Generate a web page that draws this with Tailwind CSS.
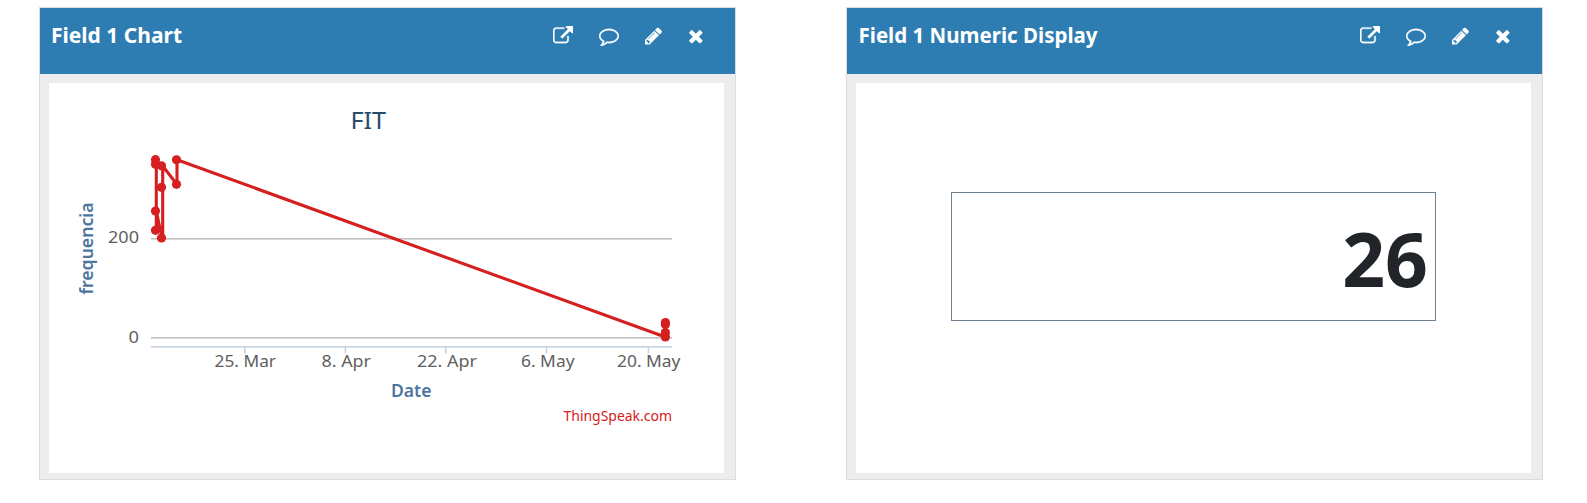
<!DOCTYPE html>
<html lang="en">
<head>
<meta charset="utf-8">
<title>Channel</title>
<script src="https://cdn.jsdelivr.net/npm/@tailwindcss/browser@4"></script>
</head>
<body class="bg-white font-['Noto_Sans',sans-serif]">
<svg class="hidden">
  <symbol id="ext" viewBox="0 0 1792 1792"><path d="M1408 928v320q0 119-84.5 203.5t-203.5 84.5h-832q-119 0-203.5-84.5t-84.5-203.5v-832q0-119 84.5-203.5t203.5-84.5h704q14 0 23 9t9 23v64q0 14-9 23t-23 9h-704q-66 0-113 47t-47 113v832q0 66 47 113t113 47h832q66 0 113-47t47-113v-320q0-14 9-23t23-9h64q14 0 23 9t9 23zm384-864v512q0 26-19 45t-45 19-45-19l-176-176-652 652q-10 10-23 10t-23-10l-114-114q-10-10-10-23t10-23l652-652-176-176q-19-19-19-45t19-45 45-19h512q26 0 45 19t19 45z"/></symbol>
  <symbol id="comment" viewBox="0 0 1792 1792"><path d="M896 384q-204 0-381.5 69.5t-282 187.5-104.5 255q0 112 71.5 213.5t201.5 175.5l87 50-27 96q-24 91-70 172 152-63 275-171l43-38 57 6q69 8 130 8 204 0 381.5-69.5t282-187.5 104.5-255-104.5-255-282-187.5-381.5-69.5zm896 512q0 174-120 321.5t-326 233-450 85.5q-70 0-145-8-198 175-460 242-49 14-114 22h-5q-15 0-27-10.5t-16-27.5v-1q-3-4-.5-12t2-10 4.5-9.5l6-9 7-8.5 8-9q7-8 31-34.5t34.5-38 31-39.5 32.5-51 27-59 26-76q-157-89-247.5-220t-90.5-281q0-174 120-321.5t326-233 450-85.5 450 85.5 326 233 120 321.5z"/></symbol>
  <symbol id="pencil" viewBox="128 0 1536 1792"><path d="M491 1536l91-91-235-235-91 91v107h128v128h107zm523-928q0-22-22-22-10 0-17 7l-542 542q-7 7-7 17 0 22 22 22 10 0 17-7l542-542q7-7 7-17zm-54-192l416 416-832 832h-416v-416zm683 96q0 53-37 90l-166 166-416-416 166-165q36-38 90-38 53 0 91 38l235 234q37 39 37 91z"/></symbol>
  <symbol id="times" viewBox="192 0 1408 1792"><path d="M1490 1322q0 40-28 68l-136 136q-28 28-68 28t-68-28l-294-294-294 294q-28 28-68 28t-68-28l-136-136q-28-28-28-68t28-68l294-294-294-294q-28-28-28-68t28-68l136-136q28-28 68-28t68 28l294 294 294-294q28-28 68-28t68 28l136 136q28 28 28 68t-28 68l-294 294 294 294q28 28 28 68z"/></symbol>
</svg>
<main class="flex gap-[110px] pl-[39px] pt-[7px]">
  <section class="flex h-[473px] w-[697px] shrink-0 flex-col border border-[#dcdcdc] bg-[#ededed]">
    <header class="flex h-[66px] shrink-0 items-start justify-between bg-[#2e7db2] pl-[11px] pr-[31px] pt-[13px] text-white">
      <h2 class="text-[21.5px]/[28px] font-bold"><svg width="260" height="28" class="overflow-visible" fill="currentColor"><text x="0" y="22" textLength="131" lengthAdjust="spacingAndGlyphs">Field 1 Chart</text></svg></h2>
      <div class="flex gap-[26px] pt-[5px]">
        <svg class="h-5 w-5 fill-white stroke-white" stroke-width="30"><use href="#ext"/></svg>
        <svg class="h-5 w-5 fill-white stroke-white" stroke-width="30"><use href="#comment"/></svg>
        <svg class="h-5 w-[17.14px] fill-white"><use href="#pencil"/></svg>
        <svg class="h-5 w-[15.71px] fill-white"><use href="#times"/></svg>
      </div>
    </header>
    <div class="mb-[6px] ml-[9px] mr-[11px] mt-[9px] h-[390px] bg-white">
      <svg class="block" width="675" height="390" viewBox="49 83 675 390">
        <g fill="#c0c0c0"><rect x="151" y="238" width="521" height="1.6"/><rect x="151" y="337" width="521" height="1.6"/></g>
        <g fill="#c0d0e0"><rect x="151" y="346" width="521" height="1.5"/><rect x="244" y="347" width="1.5" height="6.5"/><rect x="344.7" y="347" width="1.4" height="6.5"/><rect x="445" y="347" width="1.5" height="6.5"/><rect x="545.8" y="347" width="1.4" height="6.5"/><rect x="647.7" y="347" width="1.4" height="6.5"/></g>
        <g class="stroke-[#d62020]" stroke-width="3.1" fill="none" stroke-linejoin="round"><path d="M156.3 160V230V211L162 238H162.7V166L176.8 184.3H177V159.8L665.3 337V323"/></g>
        <g fill="#d62020">
          <circle cx="155.5" cy="159.7" r="4.6"/><circle cx="155.5" cy="164.3" r="4.6"/><circle cx="155.5" cy="211" r="4.6"/><circle cx="155.5" cy="230.3" r="4.6"/>
          <circle cx="161.5" cy="165.8" r="4.6"/><circle cx="161.5" cy="187.3" r="4.6"/><circle cx="161.5" cy="238" r="4.6"/>
          <circle cx="176.5" cy="159.8" r="4.6"/><circle cx="176.5" cy="184.3" r="4.6"/>
          <circle cx="665.4" cy="322.5" r="4.6"/><circle cx="665.4" cy="324.4" r="4.6"/><circle cx="665.4" cy="332.6" r="4.6"/><circle cx="665.4" cy="337" r="4.6"/>
        </g>
        <text x="350.5" y="129" font-size="23.5" fill="#274b6d" textLength="35.5" lengthAdjust="spacingAndGlyphs">FIT</text>
        <g font-size="16.5" fill="#606060">
          <text x="108" y="243" textLength="31" lengthAdjust="spacingAndGlyphs">200</text>
          <text x="128.5" y="342.5" textLength="10.5" lengthAdjust="spacingAndGlyphs">0</text>
          <text x="214.5" y="367" textLength="61.5" lengthAdjust="spacingAndGlyphs">25. Mar</text>
          <text x="321.5" y="367" textLength="49.5" lengthAdjust="spacingAndGlyphs">8. Apr</text>
          <text x="417" y="367" textLength="60" lengthAdjust="spacingAndGlyphs">22. Apr</text>
          <text x="521" y="367" textLength="53.5" lengthAdjust="spacingAndGlyphs">6. May</text>
          <text x="617" y="367" textLength="63.5" lengthAdjust="spacingAndGlyphs">20. May</text>
        </g>
        <g font-size="18" font-weight="600" fill="#4d759e">
          <text x="391" y="397" textLength="40.5" lengthAdjust="spacingAndGlyphs">Date</text>
          <text transform="translate(93 294.5) rotate(-90)" font-size="18.5" textLength="92" lengthAdjust="spacingAndGlyphs">frequencia</text>
        </g>
        <text x="563.5" y="421" font-size="14.5" fill="#d62020" textLength="108.5" lengthAdjust="spacingAndGlyphs">ThingSpeak.com</text>
      </svg>
    </div>
  </section>
  <section class="flex h-[473px] w-[697px] shrink-0 flex-col border border-[#dcdcdc] bg-[#ededed]">
    <header class="flex h-[66px] shrink-0 items-start justify-between bg-[#2e7db2] pl-[11px] pr-[31px] pt-[13px] text-white">
      <h2 class="text-[21.5px]/[28px] font-bold"><svg width="260" height="28" class="overflow-visible" fill="currentColor"><text x="0.5" y="22" textLength="239" lengthAdjust="spacingAndGlyphs">Field 1 Numeric Display</text></svg></h2>
      <div class="flex gap-[26px] pt-[5px]">
        <svg class="h-5 w-5 fill-white stroke-white" stroke-width="30"><use href="#ext"/></svg>
        <svg class="h-5 w-5 fill-white stroke-white" stroke-width="30"><use href="#comment"/></svg>
        <svg class="h-5 w-[17.14px] fill-white"><use href="#pencil"/></svg>
        <svg class="h-5 w-[15.71px] fill-white"><use href="#times"/></svg>
      </div>
    </header>
    <div class="mb-[6px] ml-[9px] mr-[11px] mt-[9px] flex h-[390px] items-start justify-center bg-white pt-[109px]">
      <div class="flex h-[129px] w-[485px] items-center justify-end border border-[#708090] pr-[7px] pt-[3px] text-[75px]/[100px] font-bold text-[#212529]">26</div>
    </div>
  </section>
</main>
</body>
</html>
